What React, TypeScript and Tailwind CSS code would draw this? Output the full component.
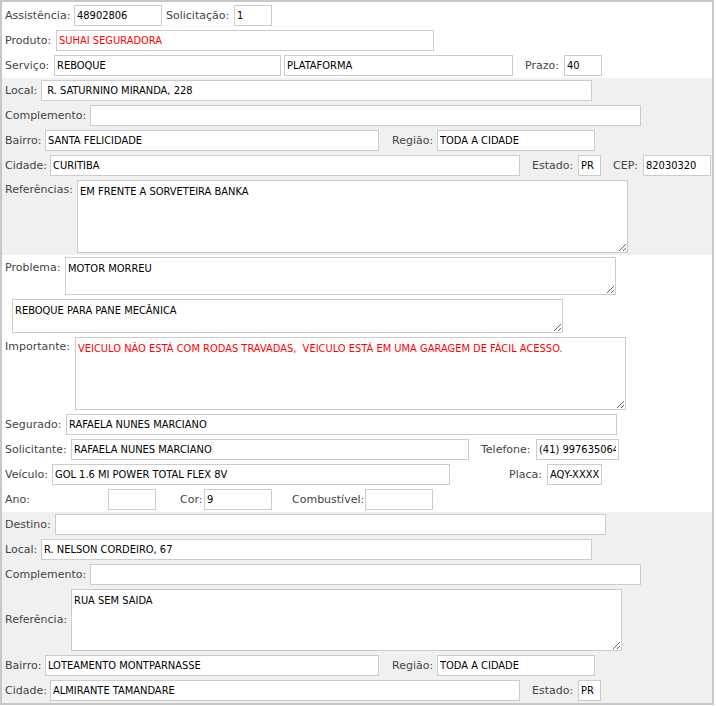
import clsx from 'clsx';

const inputCls =
  "h-[21px] shrink-0 border border-[#cccccc] bg-white px-[2px] font-['DejaVu_Sans_Condensed','DejaVu_Sans',sans-serif] font-stretch-condensed text-[11px] outline-none";

const areaCls =
  "block shrink-0 border border-[#cccccc] bg-white px-[2px] pt-[4px] font-['DejaVu_Sans_Condensed','DejaVu_Sans',sans-serif] font-stretch-condensed text-[11px] leading-[13px] outline-none";

interface FieldProps {
  label: string;
  lw: string;
  iw: string;
  value?: string;
  ml?: string;
  red?: boolean;
}

function Field({ label, lw, iw, value = '', ml, red }: FieldProps) {
  return (
    <>
      <span className={clsx('shrink-0 whitespace-nowrap pt-[1px]', lw, ml)}>{label}</span>
      <input
        readOnly
        defaultValue={value}
        className={clsx(inputCls, iw, red ? 'text-[#ff0000]' : 'text-black')}
      />
    </>
  );
}

function Row({ children }: { children: React.ReactNode }) {
  return <div className="flex h-[25px] items-center pl-[3px]">{children}</div>;
}

export default function App() {
  return (
    <div className="h-[705px] w-[714px] border-2 border-[#c8c8c8] bg-white font-['DejaVu_Sans',sans-serif] text-[11px] text-[#444444]">
      <div className="pt-[1px]">
        <Row>
          <Field label="Assistência:" lw="w-[69px]" iw="w-[88px]" value="48902806" />
          <Field label="Solicitação:" lw="w-[68px]" iw="w-[38px]" ml="ml-[4px]" value="1" />
        </Row>
        <Row>
          <Field label="Produto:" lw="w-[51px]" iw="w-[378px]" value="SUHAI SEGURADORA" red />
        </Row>
        <Row>
          <Field label="Serviço:" lw="w-[49px]" iw="w-[227px]" value="REBOQUE" />
          <input readOnly defaultValue="PLATAFORMA" className={clsx(inputCls, 'ml-[3px] w-[229px] text-black')} />
          <Field label="Prazo:" lw="w-[39px]" iw="w-[38px]" ml="ml-[12px]" value="40" />
        </Row>
      </div>

      <div className="bg-[#f0f0f0]">
        <Row>
          <Field label="Local:" lw="w-[36px]" iw="w-[551px]" value=" R. SATURNINO MIRANDA, 228" />
        </Row>
        <Row>
          <Field label="Complemento:" lw="w-[85px]" iw="w-[551px]" />
        </Row>
        <Row>
          <Field label="Bairro:" lw="w-[40px]" iw="w-[334px]" value="SANTA FELICIDADE" />
          <Field label="Região:" lw="w-[45px]" iw="w-[158px]" ml="ml-[13px]" value="TODA A CIDADE" />
        </Row>
        <Row>
          <Field label="Cidade:" lw="w-[45px]" iw="w-[470px]" value="CURITIBA" />
          <Field label="Estado:" lw="w-[46px]" iw="w-[23px]" ml="ml-[12px]" value="PR" />
          <Field label="CEP:" lw="w-[30px]" iw="w-[68px]" ml="ml-[12px]" value="82030320" />
        </Row>
        <div className="flex items-start pb-[2px] pl-[3px] pt-[2px]">
          <span className="w-[72px] shrink-0 pt-[2px]">Referências:</span>
          <textarea readOnly defaultValue="EM FRENTE A SORVETEIRA BANKA" className={clsx(areaCls, 'h-[73px] w-[551px] text-black')} />
        </div>
      </div>

      <div>
        <div className="flex items-start pl-[3px] pt-[2px]">
          <span className="w-[60px] shrink-0 pt-[3px]">Problema:</span>
          <textarea readOnly defaultValue="MOTOR MORREU" className={clsx(areaCls, 'h-[38px] w-[551px] text-black')} />
        </div>
        <div className="flex pl-[10px] pt-[4px]">
          <textarea readOnly defaultValue="REBOQUE PARA PANE MECÂNICA" className={clsx(areaCls, 'h-[34px] w-[551px] text-black')} />
        </div>
        <div className="flex items-start pb-[2px] pl-[3px] pt-[4px]">
          <span className="w-[70px] shrink-0 pt-[2px]">Importante:</span>
          <textarea
            readOnly
            defaultValue="VEICULO NÃO ESTÁ COM RODAS TRAVADAS,  VEICULO ESTÁ EM UMA GARAGEM DE FÁCIL ACESSO."
            className={clsx(areaCls, 'h-[73px] w-[551px] text-[#ff0000]')}
          />
        </div>
        <Row>
          <Field label="Segurado:" lw="w-[61px]" iw="w-[551px]" value="RAFAELA NUNES MARCIANO" />
        </Row>
        <Row>
          <Field label="Solicitante:" lw="w-[66px]" iw="w-[398px]" value="RAFAELA NUNES MARCIANO" />
          <Field label="Telefone:" lw="w-[55px]" iw="w-[83px]" ml="ml-[12px]" value="(41) 997635064" />
        </Row>
        <Row>
          <Field label="Veículo:" lw="w-[47px]" iw="w-[398px]" value="GOL 1.6 MI POWER TOTAL FLEX 8V" />
          <Field label="Placa:" lw="w-[38px]" iw="w-[55px]" ml="ml-[59px]" value="AQY-XXXX" />
        </Row>
        <Row>
          <Field label="Ano:" lw="w-[103px]" iw="w-[48px]" />
          <Field label="Cor:" lw="w-[24px]" iw="w-[68px]" ml="ml-[24px]" value="9" />
          <Field label="Combustível:" lw="w-[73px]" iw="w-[68px]" ml="ml-[20px]" />
        </Row>
      </div>

      <div className="bg-[#f0f0f0]">
        <Row>
          <Field label="Destino:" lw="w-[50px]" iw="w-[551px]" />
        </Row>
        <Row>
          <Field label="Local:" lw="w-[36px]" iw="w-[551px]" value="R. NELSON CORDEIRO, 67" />
        </Row>
        <Row>
          <Field label="Complemento:" lw="w-[85px]" iw="w-[551px]" />
        </Row>
        <div className="flex items-center pb-[2px] pl-[3px] pt-[2px]">
          <span className="w-[66px] shrink-0">Referência:</span>
          <textarea readOnly defaultValue="RUA SEM SAIDA" className={clsx(areaCls, 'h-[62px] w-[551px] text-black')} />
        </div>
        <Row>
          <Field label="Bairro:" lw="w-[40px]" iw="w-[334px]" value="LOTEAMENTO MONTPARNASSE" />
          <Field label="Região:" lw="w-[45px]" iw="w-[158px]" ml="ml-[13px]" value="TODA A CIDADE" />
        </Row>
        <Row>
          <Field label="Cidade:" lw="w-[45px]" iw="w-[470px]" value="ALMIRANTE TAMANDARE" />
          <Field label="Estado:" lw="w-[46px]" iw="w-[23px]" ml="ml-[12px]" value="PR" />
        </Row>
      </div>
    </div>
  );
}
